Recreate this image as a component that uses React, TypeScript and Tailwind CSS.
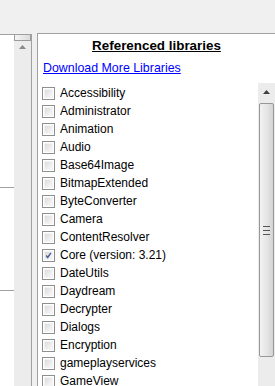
import React from "react";

const items = [
  "Accessibility",
  "Administrator",
  "Animation",
  "Audio",
  "Base64Image",
  "BitmapExtended",
  "ByteConverter",
  "Camera",
  "ContentResolver",
  "Core (version: 3.21)",
  "DateUtils",
  "Daydream",
  "Decrypter",
  "Dialogs",
  "Encryption",
  "gameplayservices",
  "GameView",
  "GestureDetector",
];

function Box({ checked }: { checked: boolean }) {
  return (
    <div className="w-[13px] h-[13px] shrink-0 border border-[#8e8f8f] bg-white p-[1px]">
      <div className="w-full h-full border border-[#f4f4f4] bg-gradient-to-br from-[#dcdcdc] to-[#f8f8f8] flex items-center justify-center">
        {checked && (
          <svg width="9" height="9" viewBox="0 0 9 9">
            <path d="M1.5 4.5 L3.5 7 L7.5 1" stroke="#4a5f97" strokeWidth="1.8" fill="none" />
          </svg>
        )}
      </div>
    </div>
  );
}

export default function App() {
  return (
    <div
      className="w-[275px] h-[386px] bg-[#f0f0f0] overflow-hidden flex flex-col"
      style={{ fontFamily: '"Liberation Sans", Arial, sans-serif' }}
    >
      <div className="h-[33px] shrink-0" />
      <div className="flex flex-1 min-h-0">
        {/* left panel */}
        <div className="w-[32px] mt-[1px] shrink-0 border-t border-r border-[#a0a0a0] flex">
          <div className="w-[14px] bg-white flex flex-col">
            <div className="h-[152px]" />
            <div className="h-[1px] bg-[#a0a0a0]" />
            <div className="h-[102px]" />
            <div className="h-[1px] bg-[#a0a0a0]" />
          </div>
          <div className="w-[17px] bg-[#ececec] flex flex-col">
            <div className="h-[6px] border border-t-0 border-[#9a9a9a] bg-gradient-to-r from-[#f4f4f4] to-[#dcdcdc]" />
            <div className="h-[12px] flex items-center justify-center">
              <svg width="7" height="4" viewBox="0 0 7 4">
                <path d="M0 4 L3.5 0 L7 4 Z" fill="#8a8a8a" />
              </svg>
            </div>
          </div>
        </div>
        <div className="w-[5px] shrink-0" />
        {/* right panel */}
        <div className="flex-1 min-w-0 bg-white border-t border-l border-[#a0a0a0] flex flex-col">
          <div className="h-[24px] flex items-center justify-center shrink-0">
            <span className="text-[13.4px] font-bold underline text-black">Referenced libraries</span>
          </div>
          <div className="h-[20px] pl-[5px] flex items-center shrink-0">
            <span className="text-[12.4px] underline text-[#0000ff]">Download More Libraries</span>
          </div>
          <div className="mt-[5px] flex flex-1 min-h-0">
            <div className="flex-1 pt-[1px] pl-[4px] overflow-hidden">
              {items.map((name, i) => (
                <div key={name} className="h-[18px] flex items-center gap-[5px]">
                  <Box checked={i === 9} />
                  <span className="text-[12px] text-black whitespace-nowrap">{name}</span>
                </div>
              ))}
            </div>
            <div className="w-[17px] shrink-0 bg-[#ececec] flex flex-col">
              <div className="h-[18px] flex items-center justify-center shrink-0">
                <svg width="7" height="4" viewBox="0 0 7 4">
                  <path d="M0 4 L3.5 0 L7 4 Z" fill="#404040" />
                </svg>
              </div>
              <div className="h-[254px] mx-[1px] mt-[2px] rounded-[2px] border border-[#979797] bg-gradient-to-r from-[#f2f2f2] via-[#e6e6e6] to-[#d4d4d4] flex items-center justify-center">
                <div className="flex flex-col gap-[1px]">
                  <div className="w-[7px] h-[1px] bg-[#555]" />
                  <div className="h-[1px]" />
                  <div className="w-[7px] h-[1px] bg-[#555]" />
                  <div className="h-[1px]" />
                  <div className="w-[7px] h-[1px] bg-[#555]" />
                </div>
              </div>
            </div>
          </div>
        </div>
      </div>
    </div>
  );
}
